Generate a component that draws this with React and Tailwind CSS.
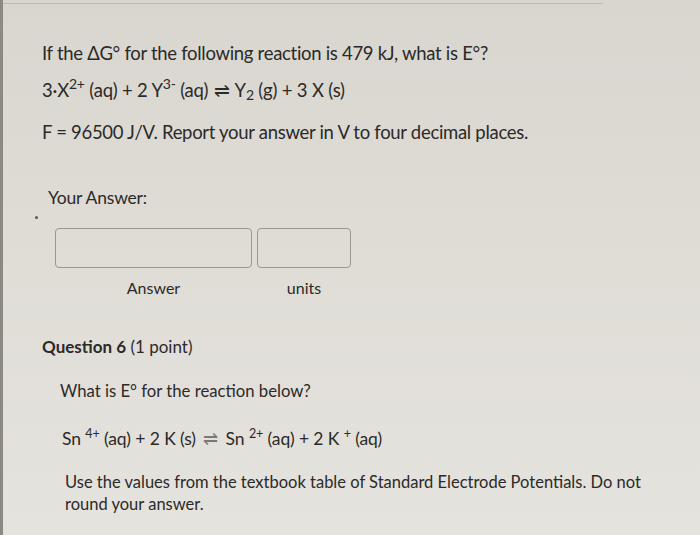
export default function App() {
  const sup1 = "text-[14px] relative -top-[8px]";
  const sub1 = "text-[14px] relative top-[3px]";
  const sup2 = "text-[12.5px] relative -top-[7px]";
  return (
    <div
      className="w-[700px] h-[535px] overflow-hidden relative text-[#2b2a28]"
      style={{ fontFamily: "Lato, 'Open Sans', sans-serif" }}
    >
      <div className="absolute inset-0 bg-gradient-to-b from-[#d9d6d0] via-[#e0ddd7] to-[#e5e3de]" />
      <div className="relative flex h-full">
        <div className="w-[3px] h-full bg-[#8c8983]" />
        <div className="flex-1 flex flex-col">
          <div className="h-[4px] border-b border-[#bdb9b2] w-[600px]" />
          <div className="pl-[39px] flex flex-col">
            <p className="mt-[38px] text-[18.5px] leading-[23px] tracking-[-0.3px]">
              If the ΔG° for the following reaction is 479 kJ, what is E°?
            </p>
            <p className="mt-[14px] text-[18.5px] leading-[23px] tracking-[-0.2px]">
              3·X<span className={sup1}>2+</span> (aq) + 2 Y<span className={sup1}>3-</span> (aq) <span className="mx-[1px]">⇌</span> Y<span className={sub1}>2</span> (g) + 3 X (s)
            </p>
            <p className="mt-[18px] text-[18.5px] leading-[23px] tracking-[-0.3px]">
              F = 96500 J/V. Report your answer in V to four decimal places.
            </p>
            <p className="mt-[43px] ml-[6px] text-[17.5px] leading-[22px] tracking-[-0.2px]">Your Answer:</p>
            <div className="mt-[7px] -ml-[7px] w-[3px] h-[3px] rounded-full bg-[#5a5955]" />
            <div className="mt-[9px] ml-[13px] flex gap-[5px]">
              <div className="w-[197px] h-[40px] rounded-[4px] border border-[#9b9892]" />
              <div className="w-[94px] h-[40px] rounded-[4px] border border-[#9b9892]" />
            </div>
            <div className="mt-[9px] ml-[13px] flex gap-[5px] text-[16px] leading-[22px]">
              <div className="w-[197px] text-center">Answer</div>
              <div className="w-[94px] text-center">units</div>
            </div>
            <p className="mt-[37px] text-[17px] leading-[22px]">
              <span className="font-bold">Question 6</span> (1 point)
            </p>
            <div className="pl-[18px] flex flex-col">
              <p className="mt-[22px] text-[16.7px] leading-[22px]">What is E° for the reaction below?</p>
              <p className="mt-[26px] ml-[2px] text-[17.5px] leading-[22px] tracking-[-0.1px]">
                Sn <span className={sup2}>4+</span> (aq) + 2 K (s) <span className="text-[#7a7874] mx-[3px]">⇌</span> Sn <span className={sup2}>2+</span> (aq) + 2 K <span className={sup2}>+</span> (aq)
              </p>
              <p className="mt-[19px] ml-[5px] text-[16.5px] leading-[22px] w-[600px]">
                Use the values from the textbook table of Standard Electrode Potentials. Do not round your answer.
              </p>
            </div>
          </div>
        </div>
      </div>
    </div>
  );
}
